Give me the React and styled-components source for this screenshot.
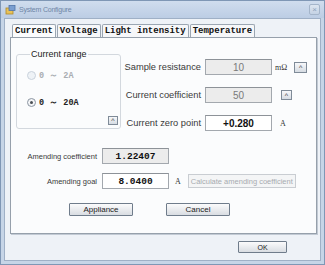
import React from 'react'
import styled, { createGlobalStyle } from 'styled-components'

const GlobalStyle = createGlobalStyle`
  html, body { margin: 0; padding: 0; background: #ffffff; }
  * { box-sizing: border-box; }
`

const sans = `"Liberation Sans", Arial, sans-serif`
const mono = `"Liberation Mono", "Courier New", monospace`

const Window = styled.div`
  width: 325px;
  height: 265px;
  display: flex;
  flex-direction: column;
  background: #c6d5e7;
  border: 1px solid #7f97b5;
  padding: 0 3px 3px 3px;
`

const TitleBar = styled.div`
  height: 17px;
  display: flex;
  align-items: center;
  gap: 3px;
  background: linear-gradient(#d0ddee, #bccde4);
  margin: 0 -3px;
  padding: 0 4px;
`

const TitleText = styled.span`
  flex: 1;
  font-family: ${sans};
  font-size: 7px;
  letter-spacing: -0.2px;
  color: #6f86a6;
`

const CloseBox = styled.div`
  width: 11px;
  height: 11px;
  display: flex;
  align-items: center;
  justify-content: center;
  border: 1px solid #a4b5ca;
  border-radius: 2px;
  background: linear-gradient(#dde6f1, #c4d2e4);
  color: #8fa2bb;
  font-family: ${sans};
  font-size: 8px;
  line-height: 1;
`

const Client = styled.div`
  flex: 1;
  display: flex;
  flex-direction: column;
  background: #eef2f7;
  border: 1px solid #9fb0c6;
  padding: 5px 3px 0 5px;
`

const TabRow = styled.div`
  display: flex;
  gap: 1px;
  height: 13px;
  padding-left: 2px;
`

const Tab = styled.div`
  height: 13px;
  padding: 0 2px;
  border: 1px solid #9ba6b2;
  border-bottom: none;
  border-radius: 2px 2px 0 0;
  background: ${p => (p.$active ? '#fbfcfd' : '#f6f7f9')};
  font-family: ${mono};
  font-weight: bold;
  font-size: 9px;
  line-height: 12px;
  color: #111;
  white-space: nowrap;
`

const Panel = styled.div`
  height: 197px;
  display: flex;
  flex-direction: column;
  background: #fbfcfd;
  border: 1px solid #96a0ab;
  box-shadow: 1px 1px 0 #c2cad4;
  padding: 11px 0 0 5px;
`

const TopSection = styled.div`
  display: flex;
  align-items: flex-start;
`

const GroupBox = styled.fieldset`
  width: 105px;
  height: 80px;
  margin: 0;
  padding: 10px 2px 0 10px;
  border: 1px solid #d3d8de;
  border-radius: 3px;
  display: flex;
  flex-direction: column;
`

const Legend = styled.legend`
  font-family: ${sans};
  font-size: 9px;
  line-height: 11px;
  color: #222;
  padding: 0 1px;
  margin-left: 3px;
`

const RadioList = styled.div`
  display: flex;
  flex-direction: column;
  gap: 16px;
`

const RadioItem = styled.div`
  display: flex;
  align-items: center;
  gap: 3px;
  height: 11px;
  font-family: ${mono};
  font-weight: bold;
  font-size: 8.5px;
  color: ${p => (p.$disabled ? '#a9adb2' : '#222')};
  white-space: pre;
`

const RadioCircle = styled.span`
  width: 9px;
  height: 9px;
  border-radius: 50%;
  border: 1px solid ${p => (p.$disabled ? '#c9d2dc' : '#8b96a2')};
  background: ${p => (p.$disabled ? '#eef2f6' : '#f3f4f6')};
  display: flex;
  align-items: center;
  justify-content: center;
  &::after {
    content: '';
    width: 3px;
    height: 3px;
    border-radius: 50%;
    background: ${p => (p.$checked ? '#4a4f55' : 'transparent')};
  }
`

const GroupFoot = styled.div`
  display: flex;
  justify-content: flex-end;
  margin-top: 8px;
`

const TinyButton = styled.div`
  width: ${p => p.$w}px;
  height: ${p => p.$h}px;
  margin-left: ${p => p.$ml || 0}px;
  display: flex;
  align-items: center;
  justify-content: center;
  border: 1px solid #7f8b98;
  background: linear-gradient(#f7f8fa, #d6dce3);
  font-family: ${sans};
  font-size: 7px;
  line-height: 1;
  color: #333;
`

const FieldColumn = styled.div`
  display: flex;
  flex-direction: column;
  gap: 12px;
  padding-top: 10px;
`

const Row = styled.div`
  display: flex;
  align-items: center;
  height: 16px;
`

const Label = styled.span`
  width: ${p => p.$w}px;
  margin-right: ${p => p.$gap}px;
  text-align: right;
  font-family: ${sans};
  font-size: ${p => p.$size}px;
  color: #3a3a3a;
  white-space: nowrap;
`

const Field = styled.div`
  width: 67px;
  height: 16px;
  display: flex;
  align-items: center;
  justify-content: center;
  border: 1px solid #a3a8ae;
  border-top-color: #8d9298;
  background: ${p => (p.$readOnly ? '#ececec' : '#ffffff')};
  font-family: ${p => (p.$mono ? mono : sans)};
  font-weight: ${p => (p.$bold ? 'bold' : 'normal')};
  font-size: ${p => (p.$mono ? 9.5 : 10)}px;
  color: ${p => (p.$readOnly && !p.$mono ? '#7a7a7a' : '#111')};
`

const Unit = styled.span`
  margin-left: ${p => p.$ml}px;
  font-family: "Liberation Serif", "Times New Roman", serif;
  font-size: 8px;
  color: #333;
`

const BottomSection = styled.div`
  display: flex;
  flex-direction: column;
  gap: 9px;
  margin-top: 17px;
`

const DisabledButton = styled.div`
  width: 108px;
  height: 14px;
  margin-left: 7px;
  display: flex;
  align-items: center;
  justify-content: center;
  border: 1px solid #c9cdd2;
  background: #f4f5f6;
  font-family: ${sans};
  font-size: 7.5px;
  color: #a7abb0;
  white-space: nowrap;
`

const ButtonRow = styled.div`
  display: flex;
  gap: 33px;
  margin-top: 14px;
  padding-left: 53px;
`

const PushButton = styled.div`
  width: ${p => p.$w}px;
  height: ${p => p.$h}px;
  display: flex;
  align-items: center;
  justify-content: center;
  border: 1px solid #6f7c8b;
  border-radius: 1px;
  background: linear-gradient(#fbfbfc, #d9dde2);
  font-family: ${sans};
  font-size: ${p => p.$size || 8}px;
  color: #222;
`

const Footer = styled.div`
  display: flex;
  justify-content: flex-end;
  padding: 7px 30px 0 0;
`

const AppIcon = () => (
  <svg width="11" height="10" viewBox="0 0 11 10">
    <rect x="1" y="3" width="7" height="6" fill="#e8c25a" stroke="#b08a2a" strokeWidth="0.8" />
    <rect x="4" y="0.5" width="6" height="5" fill="#7a9ed0" stroke="#4f74a8" strokeWidth="0.8" />
  </svg>
)

export default function App() {
  return (
    <>
      <GlobalStyle />
      <Window>
        <TitleBar>
          <AppIcon />
          <TitleText>System Configure</TitleText>
          <CloseBox>×</CloseBox>
        </TitleBar>
        <Client>
          <TabRow>
            <Tab $active>Current</Tab>
            <Tab>Voltage</Tab>
            <Tab>Light intensity</Tab>
            <Tab>Temperature</Tab>
          </TabRow>
          <Panel>
            <TopSection>
              <GroupBox>
                <Legend>Current range</Legend>
                <RadioList>
                  <RadioItem $disabled>
                    <RadioCircle $disabled />
                    {'0 ～ 2A'}
                  </RadioItem>
                  <RadioItem>
                    <RadioCircle $checked />
                    {'0 ～ 20A'}
                  </RadioItem>
                </RadioList>
                <GroupFoot>
                  <TinyButton $w={10} $h={9}>^</TinyButton>
                </GroupFoot>
              </GroupBox>
              <FieldColumn>
                <Row>
                  <Label $w={80} $gap={4} $size={9.3}>Sample resistance</Label>
                  <Field $readOnly>10</Field>
                  <Unit $ml={3}>mΩ</Unit>
                  <TinyButton $w={13} $h={11} $ml={7}>^</TinyButton>
                </Row>
                <Row>
                  <Label $w={80} $gap={4} $size={9.3}>Current coefficient</Label>
                  <Field $readOnly>50</Field>
                  <TinyButton $w={11} $h={10} $ml={9}>^</TinyButton>
                </Row>
                <Row>
                  <Label $w={80} $gap={4} $size={9.3}>Current zero point</Label>
                  <Field $bold>+0.280</Field>
                  <Unit $ml={8}>A</Unit>
                </Row>
              </FieldColumn>
            </TopSection>
            <BottomSection>
              <Row>
                <Label $w={81} $gap={5} $size={7.5}>Amending coefficient</Label>
                <Field $readOnly $mono $bold>1.22407</Field>
              </Row>
              <Row>
                <Label $w={81} $gap={5} $size={7.5}>Amending goal</Label>
                <Field $mono $bold>8.0400</Field>
                <Unit $ml={6}>A</Unit>
                <DisabledButton>Calculate amending coefficient</DisabledButton>
              </Row>
            </BottomSection>
            <ButtonRow>
              <PushButton $w={64} $h={13}>Appliance</PushButton>
              <PushButton $w={64} $h={13}>Cancel</PushButton>
            </ButtonRow>
          </Panel>
          <Footer>
            <PushButton $w={49} $h={12} $size={7}>OK</PushButton>
          </Footer>
        </Client>
      </Window>
    </>
  )
}
